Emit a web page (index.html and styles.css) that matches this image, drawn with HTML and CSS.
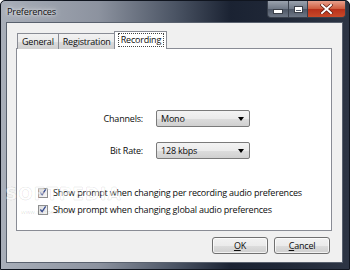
FILE: index.html
```html
<!DOCTYPE html>
<html>
<head>
<meta charset="utf-8">
<link rel="stylesheet" href="styles.css">
</head>
<body>
<div class="window">
  <div class="titlebar">
    <span class="title">Preferences</span>
    <div class="caption-buttons">
      <div class="cap cap-min"><span class="min-glyph"></span></div>
      <div class="cap cap-max"><span class="max-glyph"></span></div>
      <div class="cap cap-close">
        <svg width="13" height="10" viewBox="0 0 13 10"><path d="M2 1 L11 9 M11 1 L2 9" stroke="#5a1a10" stroke-width="3.4" stroke-linecap="square"/><path d="M2 1 L11 9 M11 1 L2 9" stroke="#ffffff" stroke-width="2" stroke-linecap="square"/></svg>
      </div>
    </div>
  </div>
  <div class="client">
    <div class="tabs">
      <div class="tab">General</div>
      <div class="tab">Registration</div>
      <div class="tab tab-active"><span class="focus">Recording</span></div>
    </div>
    <div class="panel">
      <div class="form">
        <label class="lbl">Channels:</label>
        <div class="combo"><span>Mono</span><span class="arrow"></span></div>
        <label class="lbl">Bit Rate:</label>
        <div class="combo"><span>128 kbps</span><span class="arrow"></span></div>
      </div>
      <div class="checks">
        <div class="check-row"><span class="box"><svg width="9" height="9" viewBox="0 0 9 9"><path d="M1.5 4.5 L3.5 7 L7.5 1" fill="none" stroke="#3b4f91" stroke-width="1.5"/></svg></span><span>Show prompt when changing per recording audio preferences</span></div>
        <div class="check-row"><span class="box"><svg width="9" height="9" viewBox="0 0 9 9"><path d="M1.5 4.5 L3.5 7 L7.5 1" fill="none" stroke="#3b4f91" stroke-width="1.5"/></svg></span><span>Show prompt when changing global audio preferences</span></div>
      </div>
    </div>
    <div class="buttons">
      <div class="btn"><u>O</u>K</div>
      <div class="btn"><u>C</u>ancel</div>
    </div>
  </div>
  <div class="watermark">SOFTPEDIA</div>
  <div class="watermark-small">www.softpedia.com</div>
</div>
</body>
</html>
```

FILE: styles.css
```css
* { box-sizing: border-box; }
html, body { margin: 0; padding: 0; }
body {
  width: 350px;
  height: 270px;
  overflow: hidden;
  font-family: "Open Sans", "Noto Sans", sans-serif;
  font-size: 9px;
  letter-spacing: -0.2px;
  color: #0c0c0c;
}
.window {
  position: relative;
  width: 350px;
  height: 270px;
  display: flex;
  flex-direction: column;
  background:
    linear-gradient(90deg, rgba(176,182,192,0.95) 0%, rgba(160,166,178,0.85) 28%, rgba(100,110,126,0.65) 50%, rgba(20,28,44,0.2) 66%, rgba(40,48,62,0.3) 80%, rgba(70,78,92,0.4) 100%),
    #1c2434;
  border: 1px solid #10151f;
  border-radius: 5px 5px 0 0;
}
.titlebar {
  height: 21px;
  display: flex;
  align-items: flex-start;
  justify-content: space-between;
  padding-left: 6px;
  padding-right: 3px;
}
.title {
  margin-top: 4px;
  font-size: 9.2px;
  color: #111;
  text-shadow: 0 0 6px rgba(255,255,255,0.9), 0 0 3px rgba(255,255,255,0.8);
}
.caption-buttons {
  display: flex;
  height: 17px;
}
.cap {
  height: 17px;
  border: 1px solid #39404c;
  border-top: none;
  display: flex;
  align-items: center;
  justify-content: center;
}
.cap-min {
  width: 21px;
  border-radius: 0 0 0 4px;
  border-right: none;
  background: linear-gradient(#9aa2ad, #6f7886 50%, #4e5766 51%, #6d7685);
}
.cap-max {
  width: 20px;
  background: linear-gradient(#9aa2ad, #6f7886 50%, #4e5766 51%, #6d7685);
}
.cap-close {
  width: 38px;
  border-radius: 0 0 4px 0;
  border-left: none;
  background: linear-gradient(#e8a08c, #cf5a3c 50%, #b8301a 51%, #c84a2a);
}
.min-glyph {
  width: 8px;
  height: 3px;
  margin-top: 4px;
  background: #fff;
  border: 1px solid #3a3f48;
  box-sizing: content-box;
}
.max-glyph {
  width: 7px;
  height: 5px;
  border: 1px solid #3a3f48;
  box-shadow: inset 0 0 0 1px #fff, inset 0 2px 0 1px #fff;
  box-sizing: content-box;
}
.client {
  flex: 1;
  margin: 0 6px 6px 5px;
  background: #f0f0f0;
  border: 1px solid #59616e;
  display: flex;
  flex-direction: column;
  padding: 8px 10px 0 9px;
}
.tabs {
  display: flex;
  align-items: flex-end;
  height: 18px;
  padding-left: 1px;
  position: relative;
  z-index: 1;
  margin-bottom: -1px;
}
.tab {
  height: 16px;
  padding: 0 4px;
  line-height: 15px;
  border: 1px solid #898c95;
  border-bottom: none;
  border-right: none;
  background: linear-gradient(#f2f2f2, #ebebeb 50%, #dddddd 51%, #cfcfcf);
}
.tab-active {
  height: 18px;
  margin-left: -1px;
  border-right: 1px solid #898c95;
  background: #ffffff;
  padding: 1px 2px 0 3px;
  line-height: 13px;
}
.focus {
  display: inline-block;
  border: 1px dotted #444;
  padding: 0 2px;
  line-height: 12px;
}
.panel {
  height: 183px;
  background: #fff;
  border: 1px solid #898c95;
  display: flex;
  flex-direction: column;
}
.form {
  margin-top: 61px;
  display: grid;
  grid-template-columns: 126px 94px;
  column-gap: 13px;
  row-gap: 15px;
  align-items: center;
}
.lbl {
  text-align: right;
}
.combo {
  height: 17px;
  border: 1px solid #7a7a7a;
  border-radius: 2px;
  background: linear-gradient(#f3f3f3, #ebebeb 50%, #dddddd 51%, #d0d0d0);
  display: flex;
  align-items: center;
  justify-content: space-between;
  padding: 0 5px 0 4px;
}
.arrow {
  width: 0;
  height: 0;
  border-left: 3.5px solid transparent;
  border-right: 3.5px solid transparent;
  border-top: 4px solid #000;
}
.checks {
  margin-top: 28px;
  padding-left: 21px;
  display: flex;
  flex-direction: column;
  gap: 6px;
}
.check-row {
  display: flex;
  align-items: center;
  gap: 5px;
  height: 11px;
}
.box {
  width: 10px;
  height: 10px;
  border: 1px solid #8e8f8f;
  background: linear-gradient(135deg, #dcdcdc, #f8f8f8);
  display: flex;
  align-items: center;
  justify-content: center;
}
.box svg { display: block; }
.buttons {
  display: flex;
  justify-content: flex-end;
  gap: 6px;
  margin-top: 6px;
  padding-right: 2px;
}
.btn {
  width: 56px;
  height: 17px;
  border: 1px solid #707070;
  border-radius: 3px;
  background: linear-gradient(#f2f2f2, #ebebeb 50%, #dddddd 51%, #cfcfcf);
  box-shadow: inset 0 0 0 1px rgba(255,255,255,0.7);
  display: flex;
  align-items: center;
  justify-content: center;
}
.watermark {
  position: absolute;
  left: 4px;
  top: 183px;
  font-family: "DejaVu Sans", sans-serif;
  font-weight: bold;
  font-size: 17px;
  letter-spacing: 1px;
  color: rgba(255,255,255,0.5);
  -webkit-text-stroke: 0.6px rgba(0,0,0,0.12);
}
.watermark-small {
  position: absolute;
  left: 20px;
  top: 207px;
  font-size: 6px;
  letter-spacing: 0;
  color: rgba(0,0,0,0.15);
}
```
